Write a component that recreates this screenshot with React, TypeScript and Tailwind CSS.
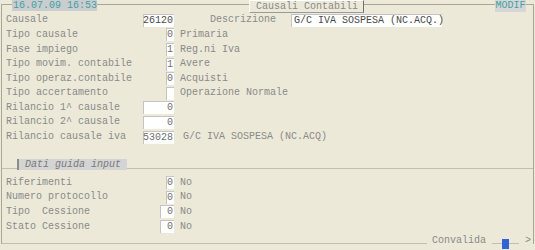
import React from "react";

const LBL = "text-[#8a8a8a]";

function Box({ w, children, dark = false }: { w: number; children?: React.ReactNode; dark?: boolean }) {
  return (
    <div
      className={`h-[13px] shrink-0 bg-white border-l border-t border-[#c4c4c4] flex items-center justify-end pr-px ${dark ? "text-[#4a4a4a]" : "text-[#707070]"}`}
      style={{ width: w }}
    >
      {children}
    </div>
  );
}

function Row({
  label,
  lead,
  w,
  value,
  after,
  afterGap = 6,
}: {
  label: string;
  lead: number;
  w: number;
  value?: string;
  after?: string;
  afterGap?: number;
}) {
  return (
    <div className="flex h-[14.6px] items-center">
      <div className={`shrink-0 whitespace-pre ${LBL}`} style={{ width: lead }}>
        {label}
      </div>
      <Box w={w}>{value}</Box>
      {after && (
        <span className={`whitespace-pre ${LBL}`} style={{ marginLeft: afterGap }}>
          {after}
        </span>
      )}
    </div>
  );
}

export default function App() {
  return (
    <div className="w-[535px] h-[250px] bg-[#ECE9D8] overflow-hidden font-['Liberation_Mono',monospace] text-[10px] leading-none relative">
      <div className="ml-[1px] mr-[1px] mt-[4px] h-[240px] border-l border-t border-r border-[#a9a799] flex flex-col">
        {/* header over the frame's top line */}
        <div className="-mt-[5px] flex items-start h-[14px]">
          <div className="w-[10px]" />
          <div className="h-[11px] w-[85px] bg-[#c9cdd0] text-[#45a0a3] flex items-center pl-[1px]">
            16.07.09 16:53
          </div>
          <div className="w-[152px]" />
          <div className="h-[13px] w-[115px] bg-[#ECE9D8] border-l border-t border-[#ffffff] border-r-[#6f6f6f] border-b border-r border-b-[#9a9a9a] text-[#8a8a8a] flex items-center pl-[6px]">
            Causali Contabili
          </div>
          <div className="flex-1" />
          <div className="h-[12px] w-[31px] bg-[#d6d6d6] text-[#45a0a3] flex items-center justify-center">
            MODIF
          </div>
          <div className="w-[7px]" />
        </div>

        <div className="pl-[4px] flex flex-col">
          <div className="flex h-[14.6px] items-center">
            <div className={`w-[137px] shrink-0 ${LBL}`}>Causale</div>
            <Box w={31} dark>26120</Box>
            <div className={`ml-[36px] w-[81px] ${LBL}`}>Descrizione</div>
            <div className="h-[13px] w-[151px] bg-white border-l border-t border-[#c4c4c4] text-[#4a4a4a] flex items-center pl-[2px] whitespace-pre">
              G/C IVA SOSPESA (NC.ACQ.)
            </div>
          </div>
          <Row label="Tipo causale" lead={160} w={8} value="0" after="Primaria" />
          <Row label="Fase impiego" lead={160} w={8} value="1" after="Reg.ni Iva" />
          <Row label="Tipo movim. contabile" lead={160} w={8} value="1" after="Avere" />
          <Row label="Tipo operaz.contabile" lead={160} w={8} value="0" after="Acquisti" />
          <Row label="Tipo accertamento" lead={160} w={8} after="Operazione Normale" />
          <Row label="Rilancio 1^ causale" lead={137} w={31} value="0" />
          <Row label="Rilancio 2^ causale" lead={137} w={31} value="0" />
          <Row label="Rilancio causale iva" lead={137} w={31} value="53028" after="G/C IVA SOSPESA (NC.ACQ)" afterGap={9} />
        </div>

        {/* section separator */}
        <div className="mt-[15px] flex items-start h-[13px]">
          <div className="w-[12px] h-[10px] border-b border-[#c2bfb0]" />
          <div className="w-[3px] h-[10px] border-b border-[#c2bfb0]" />
          <div className="h-[11px] w-[110px] bg-[#d4d4d4] border-l-2 border-[#8c8c8c] italic text-[#7a7a7a] flex items-center pl-[6px]">
            Dati guida input
          </div>
          <div className="flex-1 h-[10px] border-b border-[#c2bfb0]" />
        </div>

        <div className="mt-[4px] pl-[4px] flex flex-col">
          <Row label="Riferimenti" lead={160} w={8} value="0" after="No" />
          <Row label="Numero protocollo" lead={160} w={8} value="0" after="No" />
          <Row label="Tipo  Cessione" lead={154} w={14} value="0" after="No" />
          <Row label="Stato Cessione" lead={154} w={14} value="0" after="No" />
        </div>

        <div className="mt-auto flex items-end h-[12px] -mb-[1px]">
          <div className="flex-1 border-b border-[#c2bfb0] mb-[1px]" />
          <span className={`ml-[5px] mr-[6px] mb-[-1px] ${LBL}`}>Convalida</span>
          <div className="w-[10px] border-b border-[#c2bfb0] mb-[1px]" />
          <div className="w-[7px] h-[10px] bg-[#2f63d6] -mb-[4px]" />
          <div className="w-[10px] border-b border-[#c2bfb0] mb-[1px]" />
          <span className={`ml-[6px] mr-[2px] mb-[-1px] ${LBL}`}>&gt;</span>
        </div>
      </div>
    </div>
  );
}
